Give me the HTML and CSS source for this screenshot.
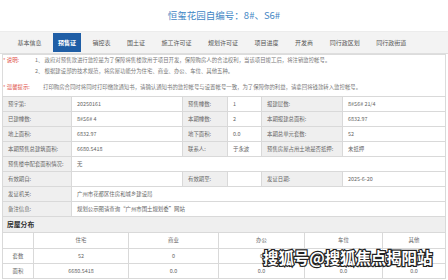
FILE: index.html
```html
<!DOCTYPE html>
<html lang="zh-CN">
<head>
    <meta charset="UTF-8">
    <title>恒玺花园 预售证</title>
    <link rel="stylesheet" href="styles.css">
</head>
<body>
    <div class="page">
        <h1 class="title">恒玺花园自编号：8#、S6#</h1>

        <div class="tabs">
            <span class="tab">基本信息</span>
            <span class="tab active">预售证</span>
            <span class="tab">销控表</span>
            <span class="tab">国土证</span>
            <span class="tab">施工许可证</span>
            <span class="tab">规划许可证</span>
            <span class="tab">项目进度</span>
            <span class="tab">开发商</span>
            <span class="tab">同行政区划</span>
            <span class="tab">同行政街道</span>
        </div>

        <div class="content">
            <div class="notes">
                <div class="note-line">
                    <span class="note-label"><i>*</i> 说明:</span>
                    <span class="note-text">1、&nbsp;政府对预售款进行监控是为了保障将售楼款用于项目开发，保障购房人的合法权利，当该项目竣工后，将注销监控帐号。</span>
                </div>
                <div class="note-line">
                    <span class="note-label"></span>
                    <span class="note-text">2、&nbsp;根据建设部的技术规范，将房屋功能分为住宅、商业、办公、车位、其他五种。</span>
                </div>
                <div class="note-line tip">
                    <span class="note-label wide"><i>*</i> 温馨提示:</span>
                    <span class="note-text">打印购房合同时将同时打印缴款通知书，请确认通知书的监控帐号与设置帐号一致，为了保障你的利益，请拿回将钱款转入监控帐号。</span>
                </div>
            </div>

            <table class="info-table">
                <colgroup>
                    <col style="width:69px">
                    <col style="width:111px">
                    <col style="width:45px">
                    <col style="width:34px">
                    <col style="width:81px">
                    <col>
                </colgroup>
                <tr>
                    <td class="label">预字第:</td><td>20250161</td>
                    <td class="label">预售幢数:</td><td>1</td>
                    <td class="label">报建层数:</td><td>8#S6# 21/4</td>
                </tr>
                <tr>
                    <td class="label">已建幢数:</td><td>8#S6# 4</td>
                    <td class="label">本期幢数:</td><td>2</td>
                    <td class="label">本期报建总面积:</td><td>6832.97</td>
                </tr>
                <tr>
                    <td class="label">地上面积:</td><td>6832.97</td>
                    <td class="label">地下面积:</td><td>0.0</td>
                    <td class="label">本期总单元套数:</td><td>52</td>
                </tr>
                <tr>
                    <td class="label">本期预售总建筑面积:</td><td>6680.5418</td>
                    <td class="label">联系人:</td><td>于永波</td>
                    <td class="label">预售房屋占用土地是否抵押:</td><td>未抵押</td>
                </tr>
                <tr>
                    <td class="label">预售楼中配套面积情况:</td><td colspan="5">无</td>
                </tr>
                <tr>
                    <td class="label">有效期自:</td><td></td>
                    <td class="label">有效期至:</td><td></td>
                    <td class="label">发证日期:</td><td>2025-6-20</td>
                </tr>
                <tr>
                    <td class="label">发证机关:</td><td colspan="5">广州市花都区住房和城乡建设局</td>
                </tr>
                <tr>
                    <td class="label">备注信息:</td><td colspan="5">规划公示图请查询“广州市国土规划委”网站</td>
                </tr>
            </table>

            <div class="section-head">房屋分布</div>

            <table class="dist-table">
                <colgroup>
                    <col style="width:31px">
                    <col style="width:95px">
                    <col style="width:90px">
                    <col style="width:86px">
                    <col style="width:78px">
                    <col>
                </colgroup>
                <tr>
                    <td></td><td>住宅</td><td>商业</td><td>办公</td><td>车位</td><td>其他</td>
                </tr>
                <tr>
                    <td>套数</td><td>52</td><td>0</td><td>0</td><td>0</td><td>0</td>
                </tr>
                <tr>
                    <td>面积</td><td>6680.5418</td><td>0.0</td><td>0.0</td><td>0.0</td><td>0.0</td>
                </tr>
            </table>
        </div>

        <div class="watermark">搜狐号@搜狐焦点揭阳站</div>
    </div>
</body>
</html>
```

FILE: styles.css
```css
* {
    margin: 0;
    padding: 0;
    box-sizing: border-box;
}

body {
    background: #fff;
    font-family: "Noto Sans CJK SC", "Noto Sans", sans-serif;
    color: #666;
}

.page {
    position: relative;
    width: 448px;
    height: 280px;
    overflow: hidden;
}

.title {
    height: 31px;
    line-height: 30px;
    text-align: center;
    font-size: 9.5px;
    font-weight: normal;
    color: #3f86c4;
}

.tabs {
    display: flex;
    align-items: center;
    gap: 6.5px;
    height: 23px;
    padding-left: 12.5px;
    background: #f3f3f3;
    border-top: 1px solid #ececec;
    border-bottom: 1px solid #dedede;
}

.tab {
    display: flex;
    align-items: center;
    height: 19px;
    padding: 0 5px;
    font-size: 6px;
    color: #555;
}

.tab.active {
    background: #1f5ea6;
    color: #fff;
    font-weight: bold;
}

.content {
    margin: 0 2px;
    width: 444px;
}

.notes {
    height: 42px;
    border: 1px solid #dcdcdc;
    border-bottom: none;
    padding-top: 0;
}

.note-line {
    display: flex;
    height: 11px;
    line-height: 11px;
    font-size: 5.4px;
    white-space: nowrap;
}

.note-line.tip {
    margin-top: 5px;
}

.note-label {
    flex: none;
    width: 32px;
    color: #e0504a;
}

.note-label.wide {
    width: 40px;
}

.note-label i {
    font-style: normal;
}

.note-text {
    color: #777;
}

.info-table,
.dist-table {
    width: 444px;
    table-layout: fixed;
    border-collapse: collapse;
    font-size: 5.4px;
}

.info-table td,
.dist-table td {
    height: 15px;
    padding: 0 0 0 5px;
    border: 1px solid #d9d9d9;
    color: #666;
    white-space: nowrap;
    overflow: hidden;
}

.info-table td.label {
    background: #efefef;
    color: #666;
}

.section-head {
    height: 16px;
    line-height: 15px;
    padding-left: 4px;
    background: #efefef;
    border: 1px solid #d9d9d9;
    border-top: none;
    font-size: 6.8px;
    font-weight: bold;
    color: #333;
}

.dist-table td {
    padding: 0;
    text-align: center;
    border-top: none;
}

.dist-table tr + tr td {
    border-top: 1px solid #d9d9d9;
}

.watermark {
    position: absolute;
    left: 263px;
    top: 246px;
    font-size: 15.4px;
    font-weight: bold;
    color: #fff;
    -webkit-text-stroke: 2.4px #222;
    paint-order: stroke fill;
    letter-spacing: 0;
    white-space: nowrap;
}
```
